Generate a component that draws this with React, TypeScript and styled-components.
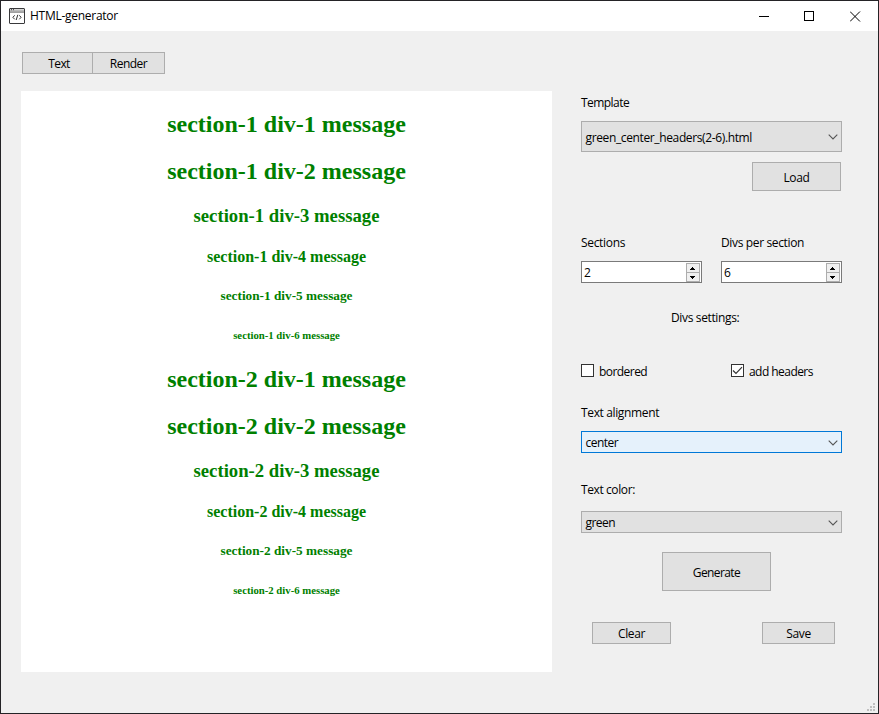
import React from 'react';
import styled, { createGlobalStyle } from 'styled-components';

const GlobalStyle = createGlobalStyle`
  *, *::before, *::after { box-sizing: border-box; }
  body { margin: 0; overflow: hidden; }
`;

const Window = styled.div`
  width: 879px;
  height: 714px;
  display: flex;
  flex-direction: column;
  position: relative;
  background: #f0f0f0;
  border: 1px solid #242326;
  font: 12px/16px "Open Sans", "Noto Sans", sans-serif;
  color: #000;
`;

const TitleBar = styled.header`
  flex: none;
  height: 30px;
  display: flex;
  align-items: center;
  padding-left: 8px;
  background: #fff;
`;

const Title = styled.span`
  flex: 1;
  margin-left: 5px;
`;

const CaptionButton = styled.button`
  width: 45.5px;
  height: 30px;
  padding: 0;
  border: 0;
  background: none;
  display: flex;
  align-items: center;
  justify-content: center;
`;

const Txt = styled.span<{ $ls?: number }>`
  letter-spacing: ${(p) => p.$ls ?? -0.36}px;
  white-space: nowrap;
`;

const Toolbar = styled.nav`
  display: flex;
  margin: 21px 0 17px 21px;
`;

const Button = styled.button<{ $w: number; $h?: number }>`
  flex: none;
  width: ${(p) => p.$w}px;
  height: ${(p) => p.$h ?? 22}px;
  padding: ${(p) => (p.$h ? 3 : 1)}px 0 0;
  border: 1px solid #adadad;
  background: #e1e1e1;
  font: inherit;
  color: inherit;
  display: flex;
  align-items: center;
  justify-content: center;
`;

const TextTab = styled(Button)`
  padding-left: 3px;
  border-right: 0;
`;

const Content = styled.main`
  display: flex;
  padding-left: 20px;
  gap: 29px;
`;

const Preview = styled.section`
  display: flow-root;
  width: 531px;
  height: 581px;
  background: #fff;
  color: green;
  text-align: center;
  font-family: "Liberation Serif", serif;
  line-height: normal;
`;

const Heading = styled.div<{ $size: number; $margin: number }>`
  font-size: ${(p) => p.$size}px;
  font-weight: bold;
  margin: ${(p) => p.$margin}px 0;
`;

const Form = styled.form`
  width: 261px;
  display: flex;
  flex-direction: column;
  padding-top: 4px;
`;

const Label = styled.label<{ $top?: number; $center?: boolean }>`
  height: 16px;
  margin-top: ${(p) => p.$top ?? 0}px;
  padding-left: ${(p) => (p.$center ? 90 : 0)}px;
`;

const Select = styled.div<{ $h?: number; $top: number; $focus?: boolean }>`
  height: ${(p) => p.$h ?? 22}px;
  margin-top: ${(p) => p.$top}px;
  padding: 1px 3px 0 3.5px;
  border: 1px solid ${(p) => (p.$focus ? '#0078d7' : '#adadad')};
  background: ${(p) => (p.$focus ? '#e5f1fb' : '#e1e1e1')};
  display: flex;
  align-items: center;
  justify-content: space-between;

  ${Txt} { padding-top: ${(p) => (p.$h ? 2 : 0)}px; }
`;

const Row = styled.div<{ $top: number; $pad?: string }>`
  display: flex;
  justify-content: space-between;
  margin-top: ${(p) => p.$top}px;
  padding: ${(p) => p.$pad ?? '0'};
`;

const Field = styled.div`
  width: 121px;
  display: flex;
  flex-direction: column;
`;

const SpinBox = styled.div`
  height: 22px;
  margin-top: 10px;
  padding: 1px 1px 0 2px;
  border: 1px solid #7a7a7a;
  background: #fff;
  display: flex;
  align-items: flex-start;
  justify-content: space-between;
`;

const SpinValue = styled.span`
  padding-top: 2px;
`;

const Stepper = styled.span`
  width: 14px;
  height: 19px;
  border: 1px solid #adadad;
  background: #f0f0f0;
  display: flex;
  flex-direction: column;
`;

const Step = styled.span`
  height: 8px;
  display: flex;
  align-items: center;
  justify-content: center;
`;

const StepDivider = styled.span`
  height: 1px;
  background: #adadad;
`;

const CheckField = styled.label`
  width: 111px;
  height: 16px;
  display: flex;
  gap: 5px;
`;

const CheckMark = styled.span`
  width: 13px;
  height: 13px;
  border: 1px solid #333;
  background: #fff;
  display: flex;
`;

const Grip = styled.svg`
  position: absolute;
  right: 3px;
  bottom: 2px;
`;

const Chevron = () => (
  <svg width="10" height="6" viewBox="0 0 10 6" fill="none" stroke="#555" strokeWidth="1.1">
    <path d="M.7 .7 5 5 9.3 .7" />
  </svg>
);

const Arrow = ({ down }: { down?: boolean }) => (
  <svg width="6" height="3" viewBox="0 0 6 3" shapeRendering="crispEdges">
    <path d={down ? 'M0 0h5v1H4v1H3v1H2V2H1V1H0z' : 'M2 0h1v1h1v1h1v1H0V2h1V1h1z'} />
  </svg>
);

const AppIcon = () => (
  <svg width="16" height="16" viewBox="0 0 16 16" fill="none">
    <rect x=".5" y=".5" width="15" height="15" rx=".5" fill="#fff" stroke="#39393b" />
    <path d="M1 1h14v3H1z" fill="#aaa" />
    <path d="M1 1h14v1.4H1z" fill="#d8d8d8" />
    <path d="M2 1.7h1M4 1.7h1" stroke="#333" />
    <path d="M1 4.5h14" stroke="#777" strokeWidth=".7" />
    <path d="M5.7 7.3 3.9 9.3l1.8 2M10.3 7.3l1.8 2-1.8 2M8.8 6.8 7.2 12" stroke="#333" strokeWidth="1" />
  </svg>
);

const Spin = ({ value }: { value: string }) => (
  <SpinBox>
    <SpinValue>{value}</SpinValue>
    <Stepper>
      <Step><Arrow /></Step>
      <StepDivider />
      <Step><Arrow down /></Step>
    </Stepper>
  </SpinBox>
);

const levels = [
  [24, 19.92],
  [24, 19.92],
  [18.72, 18.72],
  [16, 21.28],
  [13.28, 22.18],
  [10.72, 24.98],
];

export default function App() {
  return (
    <>
      <GlobalStyle />
      <Window>
        <TitleBar>
          <AppIcon />
          <Title><Txt $ls={-0.27}>HTML-generator</Txt></Title>
          <CaptionButton aria-label="Minimize">
            <svg width="11" height="11"><path d="M0 5.5h10" stroke="#000" /></svg>
          </CaptionButton>
          <CaptionButton aria-label="Maximize">
            <svg width="11" height="11"><rect x=".5" y=".5" width="9" height="9" fill="none" stroke="#000" /></svg>
          </CaptionButton>
          <CaptionButton aria-label="Close">
            <svg width="11" height="11"><path d="m0 .5 10 10m0-10-10 10" stroke="#000" /></svg>
          </CaptionButton>
        </TitleBar>
        <Toolbar>
          <TextTab $w={70}><Txt $ls={-0.55}>Text</Txt></TextTab>
          <Button $w={73}><Txt $ls={-0.5}>Render</Txt></Button>
        </Toolbar>
        <Content>
          <Preview>
            {[1, 2].map((section) =>
              levels.map(([size, margin], i) => (
                <Heading key={`${section}-${i}`} $size={size} $margin={margin}>
                  {`section-${section} div-${i + 1} message`}
                </Heading>
              )),
            )}
          </Preview>
          <Form>
            <Label><Txt $ls={-0.55}>Template</Txt></Label>
            <Select $top={10} $h={31}><Txt $ls={-0.37}>green_center_headers(2-6).html</Txt><Chevron /></Select>
            <Row $top={10} $pad="0 1px 0 171px"><Button type="button" $w={89} $h={29}><Txt>Load</Txt></Button></Row>
            <Row $top={44}>
              <Field><Label><Txt $ls={-0.32}>Sections</Txt></Label><Spin value="2" /></Field>
              <Field><Label><Txt>Divs per section</Txt></Label><Spin value="6" /></Field>
            </Row>
            <Label $top={27} $center><Txt>Divs settings:</Txt></Label>
            <Row $top={38}>
              <CheckField><CheckMark /><Txt $ls={-0.55}>bordered</Txt></CheckField>
              <CheckField>
                <CheckMark>
                  <svg width="11" height="11" fill="none" stroke="#333" strokeWidth="1.2"><path d="M1 5.5 4 8.5 10 2.2" /></svg>
                </CheckMark>
                <Txt $ls={-0.55}>add headers</Txt>
              </CheckField>
            </Row>
            <Label $top={25}><Txt>Text alignment</Txt></Label>
            <Select $top={10} $focus><Txt $ls={-0.5}>center</Txt><Chevron /></Select>
            <Label $top={29}><Txt $ls={-0.4}>Text color:</Txt></Label>
            <Select $top={13}><Txt $ls={-0.55}>green</Txt><Chevron /></Select>
            <Row $top={19} $pad="0 0 0 81px"><Button type="button" $w={109} $h={39}><Txt $ls={-0.6}>Generate</Txt></Button></Row>
            <Row $top={31} $pad="0 7px 0 11px">
              <Button type="button" $w={79}><Txt>Clear</Txt></Button>
              <Button type="button" $w={73}><Txt>Save</Txt></Button>
            </Row>
          </Form>
        </Content>
        <Grip width="8" height="8" fill="#bfbfbf">
          <path d="M6 0h2v2H6zM3 3h2v2H3zM6 3h2v2H6zM0 6h2v2H0zM3 6h2v2H3zM6 6h2v2H6z" />
        </Grip>
      </Window>
    </>
  );
}
